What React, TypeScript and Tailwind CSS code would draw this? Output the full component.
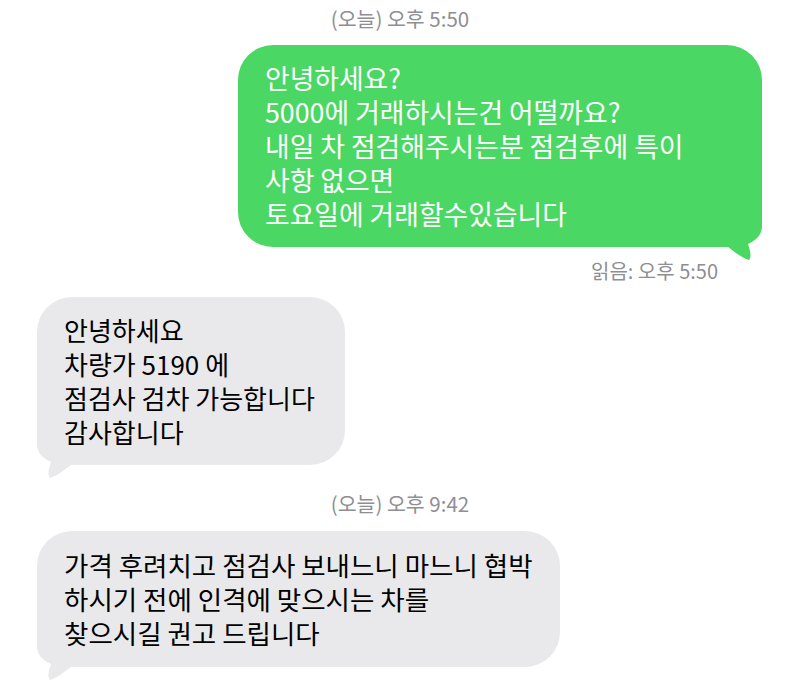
import React from "react";

const FONT = { fontFamily: '"Noto Sans CJK KR", "Noto Sans", sans-serif' };

function GreenTail() {
  return (
    <svg
      className="absolute right-0 bottom-[-14px]"
      width="45"
      height="60"
      viewBox="0 0 45 60"
    >
      <path
        d="M45 0 L45 24 C45 30 44 37 31 43 C33 49 35 55 32 59 C25 57 18 51 11 46 L0 46 L0 0 Z"
        fill="#4bd763"
      />
    </svg>
  );
}

function GrayTail() {
  return (
    <svg
      className="absolute left-0 bottom-[-14px]"
      width="45"
      height="60"
      viewBox="0 0 45 60"
    >
      <path
        d="M0 0 L0 24 C0 30 1 37 14 43 C12 49 10 55 13 59 C20 57 27 51 34 46 L45 46 L45 0 Z"
        fill="#e9e9eb"
      />
    </svg>
  );
}

function Lines({ lines }: { lines: string[] }) {
  return (
    <>
      {lines.map((l, i) => (
        <div key={i} className="whitespace-pre">
          {l}
        </div>
      ))}
    </>
  );
}

export default function App() {
  return (
    <div
      className="w-[800px] h-[680px] bg-white overflow-hidden flex flex-col"
      style={FONT}
    >
      <div className="mt-[8px] text-center text-[20.5px] leading-[20px] text-[#8e8e93]">
        (오늘) 오후 5:50
      </div>

      <div className="mt-[17px] flex justify-end pr-[38px]">
        <div className="relative w-[524px] rounded-[35px] bg-[#4bd763] pl-[27px] pr-[16px] py-[16px] text-[26.8px] leading-[34px] text-white">
          <GreenTail />
          <div className="relative">
            <Lines
              lines={[
                "안녕하세요?",
                "5000에 거래하시는건 어떨까요?",
                "내일 차 점검해주시는분 점검후에 특이",
                "사항 없으면",
                "토요일에 거래할수있습니다",
              ]}
            />
          </div>
        </div>
      </div>

      <div className="mt-[14px] text-right pr-[82px] text-[20px] leading-[20px] text-[#8e8e93]">
        읽음: 오후 5:50
      </div>

      <div className="mt-[16px] flex pl-[37px]">
        <div className="relative w-[308px] rounded-[35px] bg-[#e9e9eb] pl-[27px] pr-[12px] py-[16px] text-[26px] leading-[34px] text-black">
          <GrayTail />
          <div className="relative">
            <Lines
              lines={[
                "안녕하세요",
                "차량가 5190 에",
                "점검사 검차 가능합니다",
                "감사합니다",
              ]}
            />
          </div>
        </div>
      </div>

      <div className="mt-[28px] text-center text-[20.5px] leading-[20px] text-[#8e8e93]">
        (오늘) 오후 9:42
      </div>

      <div className="mt-[18px] flex pl-[37px]">
        <div className="relative w-[523px] rounded-[35px] bg-[#e9e9eb] pl-[27px] pr-[12px] py-[17px] text-[26.5px] leading-[34px] text-black">
          <GrayTail />
          <div className="relative">
            <Lines
              lines={[
                "가격 후려치고 점검사 보내느니 마느니 협박",
                "하시기 전에 인격에 맞으시는 차를",
                "찾으시길 권고 드립니다",
              ]}
            />
          </div>
        </div>
      </div>
    </div>
  );
}
